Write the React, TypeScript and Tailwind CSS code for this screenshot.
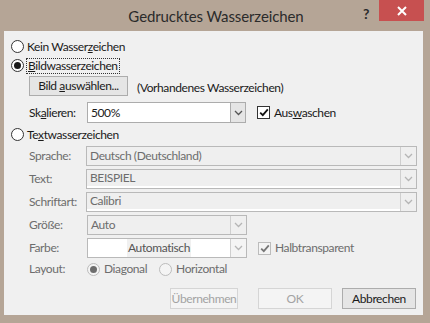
import React from "react";

const F = { fontFamily: "Lato, 'Noto Sans', sans-serif" };

function Chevron({ color = "#606060" }: { color?: string }) {
  return (
    <svg width="9" height="6" viewBox="0 0 9 6">
      <path d="M1 1 L4.5 4.5 L8 1" fill="none" stroke={color} strokeWidth="1.3" />
    </svg>
  );
}

function Radio({ checked, disabled }: { checked?: boolean; disabled?: boolean }) {
  return (
    <div
      className={`w-[13px] h-[13px] rounded-full border flex items-center justify-center shrink-0 ${
        disabled ? "border-[#bcbcbc] bg-[#f4f4f4]" : "border-[#333333] bg-white"
      }`}
    >
      {checked && (
        <div className={`w-[7px] h-[7px] rounded-full ${disabled ? "bg-[#6d6d6d]" : "bg-[#1a1a1a]"}`} />
      )}
    </div>
  );
}

function Check({ disabled }: { disabled?: boolean }) {
  return (
    <div
      className={`w-[13px] h-[13px] border flex items-center justify-center shrink-0 ${
        disabled ? "border-[#bcbcbc] bg-[#f4f4f4]" : "border-[#333333] bg-white"
      }`}
    >
      <svg width="10" height="9" viewBox="0 0 10 9">
        <path
          d="M1.2 4.6 L3.8 7.2 L8.8 1.3"
          fill="none"
          stroke={disabled ? "#777777" : "#111111"}
          strokeWidth="1.8"
        />
      </svg>
    </div>
  );
}

function DisCombo({ text, w, white }: { text: string; w: string; white?: boolean }) {
  return (
    <div className={`${w} h-[20px] border border-[#b9b9b9] bg-[#efefef] flex items-stretch`}>
      <div
        className={`flex-1 flex items-center pl-[3px] text-[#6d6d6d] ${
          white ? "border-b-2 border-white" : ""
        }`}
      >
        <span>{text}</span>
      </div>
      <div className="w-[16px] border-l border-[#cfcfcf] flex items-center justify-center">
        <Chevron color="#b5b5b5" />
      </div>
    </div>
  );
}

export default function App() {
  return (
    <div
      className="w-[430px] h-[323px] bg-[#b5a596] flex flex-col text-[12px] tracking-[-0.4px] text-[#1a1a1a]"
      style={F}
    >
      {/* title bar */}
      <div className="h-[31px] flex relative">
        <div className="flex-1 flex items-center justify-center pt-[2px] text-[15px] tracking-[-0.1px] text-[#2b2b2b] pl-[2px]">
          <span>Gedrucktes Wasserzeichen</span>
        </div>
        <div className="absolute left-[363px] top-[3px] text-[14px] font-bold text-[#2b2b2b]">?</div>
        <div className="absolute left-[379px] top-0 w-[45px] h-[21px] bg-[#c75050] flex items-center justify-center">
          <svg width="10" height="10" viewBox="0 0 10 10">
            <path d="M1 1 L9 9 M9 1 L1 9" stroke="white" strokeWidth="2" />
          </svg>
        </div>
      </div>
      {/* client */}
      <div className="ml-[4px] w-[419px] h-[284px] bg-[#f0f0f0] flex flex-col">
        <div className="h-[19px] mt-[6px] flex items-center pl-[7px] gap-[3px]">
          <Radio />
          <span>
            Kein Wasser<u>z</u>eichen
          </span>
        </div>
        <div className="h-[19px] flex items-center pl-[7px] gap-[2px]">
          <Radio checked />
          <span className="border border-dotted border-[#333] px-[1px] leading-[14px]">
            <u>B</u>ildwasserzeichen
          </span>
        </div>
        <div className="h-[20px] mt-[1px] flex items-center">
          <div className="ml-[25px] w-[99px] h-[20px] border border-[#acacac] bg-[#e5e5e5] flex items-center justify-center">
            <span>
              Bild <u>a</u>uswählen...
            </span>
          </div>
          <span className="ml-[9px] pt-[4px]">(Vorhandenes Wasserzeichen)</span>
        </div>
        <div className="h-[21px] mt-[6px] flex items-center">
          <span className="ml-[25px] w-[58px]">
            Sk<u>a</u>lieren:
          </span>
          <div className="w-[159px] h-[21px] border border-[#acacac] bg-white flex items-stretch">
            <div className="flex-1 flex items-center pl-[3px]">
              <span>500%</span>
            </div>
            <div className="w-[15px] bg-[#e5e5e5] border-l border-[#acacac] flex items-center justify-center">
              <Chevron color="#555555" />
            </div>
          </div>
          <div className="ml-[11px] flex items-center gap-[4px]">
            <Check />
            <span>
              Aus<u>w</u>aschen
            </span>
          </div>
        </div>
        <div className="h-[19px] mt-[2px] flex items-center pl-[7px] gap-[3px]">
          <Radio />
          <span>
            Te<u>x</u>twasserzeichen
          </span>
        </div>
        <div className="flex flex-col gap-[3px] mt-[2px]">
          <div className="h-[20px] flex items-center">
            <span className="ml-[25px] w-[57px] text-[#6d6d6d]">Sprache:</span>
            <DisCombo text="Deutsch (Deutschland)" w="w-[331px]" />
          </div>
          <div className="h-[20px] flex items-center">
            <span className="ml-[25px] w-[57px] text-[#6d6d6d]">Text:</span>
            <DisCombo text="BEISPIEL" w="w-[331px]" white />
          </div>
          <div className="h-[20px] flex items-center">
            <span className="ml-[25px] w-[57px] text-[#6d6d6d]">Schriftart:</span>
            <DisCombo text="Calibri" w="w-[331px]" white />
          </div>
          <div className="h-[20px] flex items-center">
            <span className="ml-[25px] w-[58px] text-[#6d6d6d]">Größe:</span>
            <DisCombo text="Auto" w="w-[160px]" />
          </div>
          <div className="h-[20px] flex items-center">
            <span className="ml-[25px] w-[58px] text-[#6d6d6d]">Farbe:</span>
            <div className="w-[160px] h-[20px] border border-[#b9b9b9] bg-white flex items-stretch">
              <div className="flex-1 flex items-center justify-center">
                <span className="bg-[#f0f0f0] px-[1px] text-[#555555]">Automatisch</span>
              </div>
              <div className="w-[16px] border-l border-[#cfcfcf] bg-[#f4f4f4] flex items-center justify-center">
                <Chevron color="#b5b5b5" />
              </div>
            </div>
            <div className="ml-[11px] flex items-center gap-[4px] text-[#6d6d6d]">
              <Check disabled />
              <span>Halbtransparent</span>
            </div>
          </div>
        </div>
        <div className="h-[20px] mt-[1px] flex items-center text-[#6d6d6d]">
          <span className="ml-[25px] w-[58px]">Layout:</span>
          <Radio checked disabled />
          <span className="ml-[4px]">Diagonal</span>
          <div className="ml-[12px]">
            <Radio disabled />
          </div>
          <span className="ml-[4px]">Horizontal</span>
        </div>
        <div className="h-[21px] mt-[9px] flex items-center">
          <div className="ml-[166px] w-[68px] h-[21px] border border-[#d5d5d5] bg-[#f4f4f4] flex items-center justify-center text-[#a3a3a3]">
            <span>Übernehmen</span>
          </div>
          <div className="ml-[20px] w-[74px] h-[21px] border border-[#d5d5d5] bg-[#f4f4f4] flex items-center justify-center text-[#a3a3a3]">
            <span>OK</span>
          </div>
          <div className="ml-[10px] w-[74px] h-[21px] border border-[#acacac] bg-[#e5e5e5] flex items-center justify-center">
            <span>Abbrechen</span>
          </div>
        </div>
      </div>
    </div>
  );
}
